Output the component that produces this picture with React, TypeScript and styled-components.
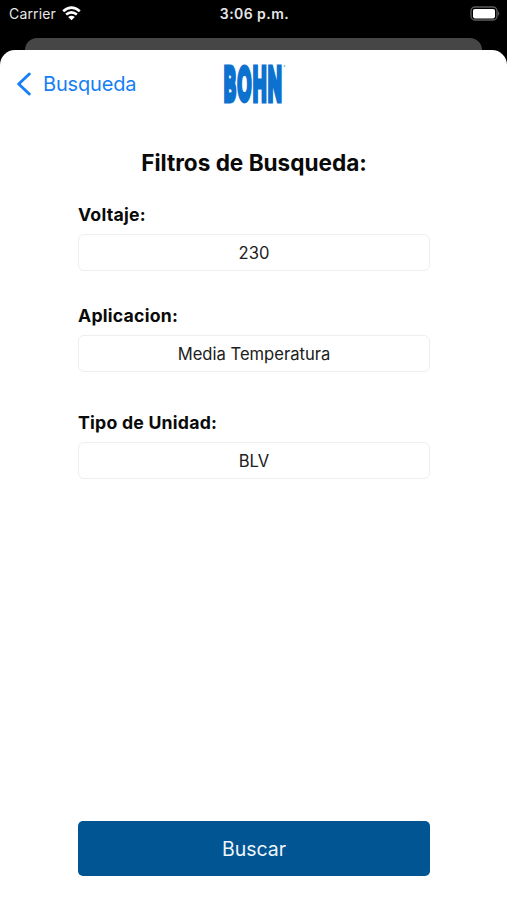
import React from "react";
import styled, { createGlobalStyle } from "styled-components";

const GlobalStyle = createGlobalStyle`
  * { box-sizing: border-box; }
  body { margin: 0; background: #000; font-family: Inter, "Liberation Sans", sans-serif; }
`;

const Screen = styled.div`
  height: 900px;
  display: flex;
  flex-direction: column;
  background: #000;
  overflow: hidden;
`;

const StatusBar = styled.header`
  height: 38px;
  flex: none;
  display: grid;
  grid-template-columns: 1fr auto 1fr;
  padding: 0 7px 10px 9px;
  align-items: center;
  color: #e6e6e6;
  font-size: 14px;
  line-height: 18px;
`;

const Carrier = styled.div`
  display: flex;
  align-items: center;
  gap: 6px;
  letter-spacing: 0.15px;
`;

const WifiIcon = styled.svg`
  margin-top: -2px;
`;

const Clock = styled.time`
  font-weight: 600;
  letter-spacing: 0.45px;
`;

const BatteryIcon = styled.svg`
  justify-self: end;
  margin-top: -2px;
`;

const SheetBehind = styled.div`
  height: 12px;
  flex: none;
  margin: 0 25px;
  border-radius: 12px 12px 0 0;
  background: #464646;
`;

const Sheet = styled.main`
  flex: 1;
  display: flex;
  flex-direction: column;
  background: #fff;
  border-radius: 15px 15px 0 0;
`;

const NavBar = styled.nav`
  height: 68px;
  display: grid;
  grid-template-columns: 1fr auto 1fr;
  align-items: center;
  padding: 0 16px;
`;

const LogoMark = styled.svg`
  overflow: visible;
`;

const BackButton = styled.button`
  display: flex;
  align-items: center;
  gap: 11px;
  justify-self: start;
  padding: 0;
  border: 0;
  background: none;
  color: #1580f5;
  font: 400 20px/26px Inter, sans-serif;
  letter-spacing: -0.17px;
`;

const Content = styled.section`
  flex: 1;
  display: flex;
  flex-direction: column;
  padding: 30px 77px 24px 78px;
`;

const Title = styled.h1`
  margin: 0 0 27px;
  font-size: 22.6px;
  line-height: 30px;
  font-weight: 700;
  letter-spacing: -0.02px;
  text-align: center;
  color: #0a0a0a;
  white-space: nowrap;
`;

const Field = styled.div<{ $after: number }>`
  margin-bottom: ${(p) => p.$after}px;
`;

const Label = styled.label`
  display: block;
  height: 19px;
  line-height: 19px;
  font-size: 17.7px;
  font-weight: 700;
  letter-spacing: 0.22px;
  color: #0a0a0a;
`;

const Value = styled.div`
  height: 37px;
  margin-top: 10px;
  display: flex;
  align-items: center;
  justify-content: center;
  border: 1px solid #eeeeee;
  border-radius: 6px;
  font-size: 16.6px;
  color: #202020;
`;

const SearchButton = styled.button`
  height: 55px;
  margin-top: auto;
  border: 0;
  border-radius: 5px;
  background: #005592;
  color: #eef6fc;
  font: 400 19.5px/24px Inter, sans-serif;
`;

const filters = [
  { label: "Voltaje:", value: "230", after: 35 },
  { label: "Aplicacion:", value: "Media Temperatura", after: 41 },
  { label: "Tipo de Unidad:", value: "BLV", after: 0 },
];

const Wifi = () => (
  <WifiIcon width="19" height="15" viewBox="0 0 19 15" fill="none" stroke="#fff" strokeWidth="2.6">
    <path d="M1.2 5.3 Q9.5 -2 17.8 5.3" />
    <path d="M4.1 8.6 Q9.5 4 14.9 8.6" />
    <path d="M6.2 10.9 Q9.5 8.4 12.8 10.9 L9.5 14.2Z" fill="#fff" stroke="none" />
  </WifiIcon>
);

const Battery = () => (
  <BatteryIcon width="30" height="15" viewBox="0 0 30 15">
    <rect x="1" y="1" width="26" height="13" rx="4" fill="none" stroke="#5c5c5c" strokeWidth="1.4" />
    <rect x="3" y="3" width="22" height="9.4" rx="1.8" fill="#fff" />
    <path d="M28.2 5.2 Q30.4 7.5 28.2 9.8Z" fill="#6a6a6a" />
  </BatteryIcon>
);

const Chevron = () => (
  <svg width="16" height="24" viewBox="0 0 16 24" fill="none" stroke="#1580f5" strokeWidth="2.9" strokeLinecap="round" strokeLinejoin="round">
    <path d="M13.3 2 L2.7 12 L13.3 22" />
  </svg>
);

const Logo = () => (
  <LogoMark width="62" height="42" viewBox="0 0 62 42" role="img" aria-label="BOHN">
    <g transform="translate(1 37.4) scale(1 2.42)">
      <text fontFamily="Inter" fontWeight="500" fontSize="18" letterSpacing="1.7" fill="#0d72cf" stroke="#0d72cf" strokeWidth="2.8">BOHN</text>
    </g>
    <circle cx="61.5" cy="3" r="0.9" fill="#9cbad4" />
  </LogoMark>
);

export default function App() {
  return (
    <>
      <GlobalStyle />
      <Screen>
        <StatusBar>
          <Carrier>Carrier <Wifi /></Carrier>
          <Clock>3:06 p.m.</Clock>
          <Battery />
        </StatusBar>
        <SheetBehind />
        <Sheet>
          <NavBar>
            <BackButton><Chevron />Busqueda</BackButton>
            <Logo />
          </NavBar>
          <Content>
            <Title>Filtros de Busqueda:</Title>
            {filters.map((f) => (
              <Field key={f.label} $after={f.after}>
                <Label>{f.label}</Label>
                <Value>{f.value}</Value>
              </Field>
            ))}
            <SearchButton>Buscar</SearchButton>
          </Content>
        </Sheet>
      </Screen>
    </>
  );
}
